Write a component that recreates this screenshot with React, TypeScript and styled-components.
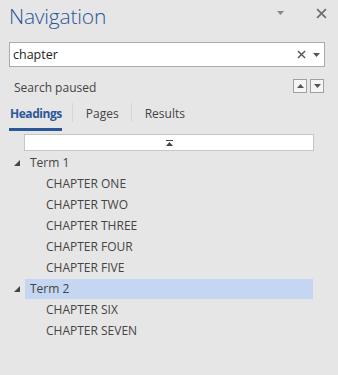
import styled, { createGlobalStyle } from 'styled-components'

const GlobalStyle = createGlobalStyle`
  html, body {
    margin: 0;
    padding: 0;
    background: #e6e6e6;
  }
  body {
    font-family: 'Open Sans', 'Noto Sans', sans-serif;
    color: #444;
  }
`

const blue = '#2b579a'

const Panel = styled.div`
  width: 338px;
  height: 375px;
  background: #e6e6e6;
  overflow: hidden;
`

const Header = styled.div`
  display: flex;
  align-items: flex-start;
  height: 34px;
  padding: 0 8px 0 9px;
`

const Title = styled.h1`
  flex: 1;
  margin: 1px 0 0;
  font-family: 'Open Sans', sans-serif;
  font-weight: 300;
  font-size: 21px;
  letter-spacing: -0.2px;
  color: ${blue};
  line-height: 30px;
`

const HeaderButton = styled.button<{ $gap?: number }>`
  border: 0;
  background: none;
  padding: 0;
  display: flex;
  align-items: center;
  justify-content: center;
  width: 18px;
  height: 18px;
  margin-top: 4px;
  margin-left: ${(p) => p.$gap ?? 0}px;
`

const SearchBox = styled.div`
  display: flex;
  align-items: center;
  margin: 8px 13px 0 9px;
  height: 23px;
  border: 1px solid #ababab;
  background: #fff;
`

const SearchText = styled.span`
  flex: 1;
  padding-left: 3px;
  font-size: 12.5px;
  color: #222;
`

const BoxIcon = styled.span<{ $w: number }>`
  display: flex;
  align-items: center;
  justify-content: center;
  width: ${(p) => p.$w}px;
  height: 100%;
`

const StatusRow = styled.div`
  display: flex;
  align-items: center;
  margin: 11px 14px 0 14px;
  height: 15px;
`

const StatusText = styled.span`
  flex: 1;
  font-size: 12px;
  padding-top: 3px;
`

const NavButton = styled.button`
  width: 14px;
  height: 14px;
  padding: 0;
  margin-left: 3px;
  border: 1px solid #a0a0a0;
  background: #f5f5f5;
  display: flex;
  align-items: center;
  justify-content: center;
`

const Tabs = styled.div`
  display: flex;
  align-items: stretch;
  margin: 9px 0 0 9px;
  height: 29px;
`

const Tab = styled.div<{ $active?: boolean }>`
  display: flex;
  align-items: center;
  padding: 0 ${(p) => (p.$active ? 0 : 12)}px 4px ${(p) => (p.$active ? 1 : 13)}px;
  margin-right: ${(p) => (p.$active ? 10 : 0)}px;
  font-size: 12px;
  font-weight: ${(p) => (p.$active ? 700 : 400)};
  letter-spacing: ${(p) => (p.$active ? '-0.45px' : '0')};
  color: ${(p) => (p.$active ? blue : '#444')};
  border-bottom: 3px solid ${(p) => (p.$active ? blue : 'transparent')};
`

const TabDivider = styled.span`
  width: 1px;
  margin: 1px 0 9px;
  background: #d6d6d6;
`

const CollapseBar = styled.div`
  display: flex;
  align-items: center;
  justify-content: center;
  margin: 3px 24px 0 24px;
  height: 15px;
  border: 1px solid #c6c6c6;
  background: #fff;
`

const Tree = styled.div`
  margin-top: 1px;
`

const Row = styled.div<{ $level: number }>`
  display: flex;
  align-items: center;
  height: 21px;
  padding-left: ${(p) => (p.$level === 0 ? 14 : 46)}px;
  font-size: 12px;
  color: #444;
`

const Twisty = styled.span`
  width: 11px;
  display: flex;
  align-items: center;
`

const Label = styled.span<{ $selected?: boolean }>`
  display: flex;
  align-items: center;
  height: 20px;
  padding-left: 5px;
  width: ${(p) => (p.$selected ? '283px' : 'auto')};
  background: ${(p) => (p.$selected ? '#c4d6f1' : 'transparent')};
`

const Cross = ({ size, color }: { size: number; color: string }) => (
  <svg width={size} height={size} viewBox="0 0 10 10">
    <path d="M1 1L9 9M9 1L1 9" stroke={color} strokeWidth="1.6" />
  </svg>
)

const Caret = ({ color = '#666' }: { color?: string }) => (
  <svg width="7" height="4" viewBox="0 0 7 4">
    <path d="M0 0H7L3.5 4Z" fill={color} />
  </svg>
)

const Expanded = () => (
  <svg width="6" height="6" viewBox="0 0 6 6">
    <path d="M6 0V6H0Z" fill="#444" />
  </svg>
)

type Heading = { title: string; chapters: string[]; selected?: boolean }

const headings: Heading[] = [
  {
    title: 'Term 1',
    chapters: ['CHAPTER ONE', 'CHAPTER TWO', 'CHAPTER THREE', 'CHAPTER FOUR', 'CHAPTER FIVE'],
  },
  { title: 'Term 2', chapters: ['CHAPTER SIX', 'CHAPTER SEVEN'], selected: true },
]

export default function App() {
  return (
    <Panel>
      <GlobalStyle />
      <Header>
        <Title>Navigation</Title>
        <HeaderButton>
          <Caret color="#888" />
        </HeaderButton>
        <HeaderButton $gap={23}>
          <Cross size={11} color="#707070" />
        </HeaderButton>
      </Header>

      <SearchBox>
        <SearchText>chapter</SearchText>
        <BoxIcon $w={14}>
          <Cross size={9} color="#555" />
        </BoxIcon>
        <BoxIcon $w={16}>
          <Caret color="#555" />
        </BoxIcon>
      </SearchBox>

      <StatusRow>
        <StatusText>Search paused</StatusText>
        <NavButton>
          <svg width="7" height="4" viewBox="0 0 7 4">
            <path d="M0 4H7L3.5 0Z" fill="#555" />
          </svg>
        </NavButton>
        <NavButton>
          <Caret color="#555" />
        </NavButton>
      </StatusRow>

      <Tabs>
        <Tab $active>Headings</Tab>
        <TabDivider />
        <Tab>Pages</Tab>
        <TabDivider />
        <Tab>Results</Tab>
      </Tabs>

      <CollapseBar>
        <svg width="7" height="6" viewBox="0 0 7 6">
          <path d="M0 0.5H7" stroke="#444" strokeWidth="1" />
          <path d="M0 6H7L3.5 2Z" fill="#444" />
        </svg>
      </CollapseBar>

      <Tree>
        {headings.map((h) => (
          <div key={h.title}>
            <Row $level={0}>
              <Twisty>
                <Expanded />
              </Twisty>
              <Label $selected={h.selected}>{h.title}</Label>
            </Row>
            {h.chapters.map((c) => (
              <Row key={c} $level={1}>
                {c}
              </Row>
            ))}
          </div>
        ))}
      </Tree>
    </Panel>
  )
}
